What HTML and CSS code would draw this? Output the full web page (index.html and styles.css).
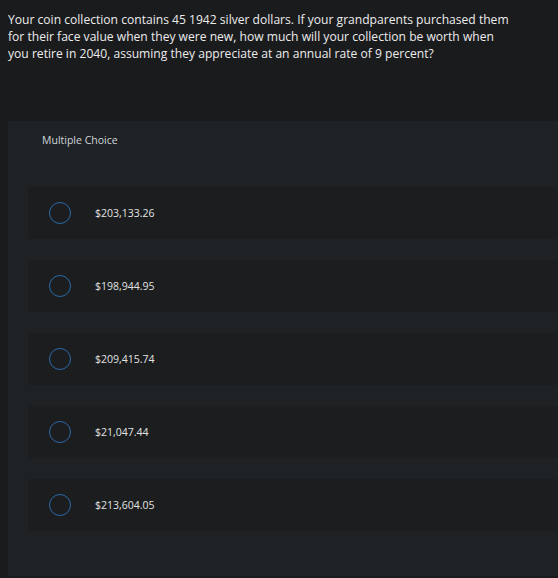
FILE: index.html
```html
<!DOCTYPE html>
<html>
<head>
<meta charset="utf-8">
<link rel="stylesheet" href="styles.css">
</head>
<body>
<div class="question">Your coin collection contains 45 1942 silver dollars. If your grandparents purchased them<br>for their face value when they were new, how much will your collection be worth when<br>you retire in 2040, assuming they appreciate at an annual rate of 9 percent?</div>
<div class="panel">
  <div class="panel-title">Multiple Choice</div>
  <div class="options">
    <div class="option"><span class="radio"></span><span class="label">$203,133.26</span></div>
    <div class="option"><span class="radio"></span><span class="label">$198,944.95</span></div>
    <div class="option"><span class="radio"></span><span class="label">$209,415.74</span></div>
    <div class="option"><span class="radio"></span><span class="label">$21,047.44</span></div>
    <div class="option"><span class="radio"></span><span class="label">$213,604.05</span></div>
  </div>
</div>
</body>
</html>
```
FILE: styles.css
```css
html, body {
  margin: 0;
  padding: 0;
  background: #1a1b1d;
  height: 100%;
}
body {
  font-family: "Open Sans", "Liberation Sans", sans-serif;
  overflow: hidden;
}
.question {
  padding: 11px 8px 0 8px;
  font-size: 12.1px;
  line-height: 17px;
  color: #ececec;
  height: 110px;
}
.panel {
  margin-left: 8px;
  background: #1f2224;
  padding: 0 0 45px 20px;
}
.panel-title {
  padding: 13px 0 0 14px;
  height: 53px;
  font-size: 10.5px;
  line-height: 13px;
  color: #cfd6dd;
}
.options {
  display: flex;
  flex-direction: column;
  gap: 21px;
}
.option {
  height: 52px;
  background: #1b1d1f;
  display: flex;
  align-items: center;
  padding-left: 21px;
}
.radio {
  width: 20px;
  height: 20px;
  border: 1.5px solid #2b6aa6;
  border-radius: 50%;
  flex: none;
}
.label {
  margin-left: 24px;
  font-size: 10.5px;
  color: #e2e2e2;
}
```
